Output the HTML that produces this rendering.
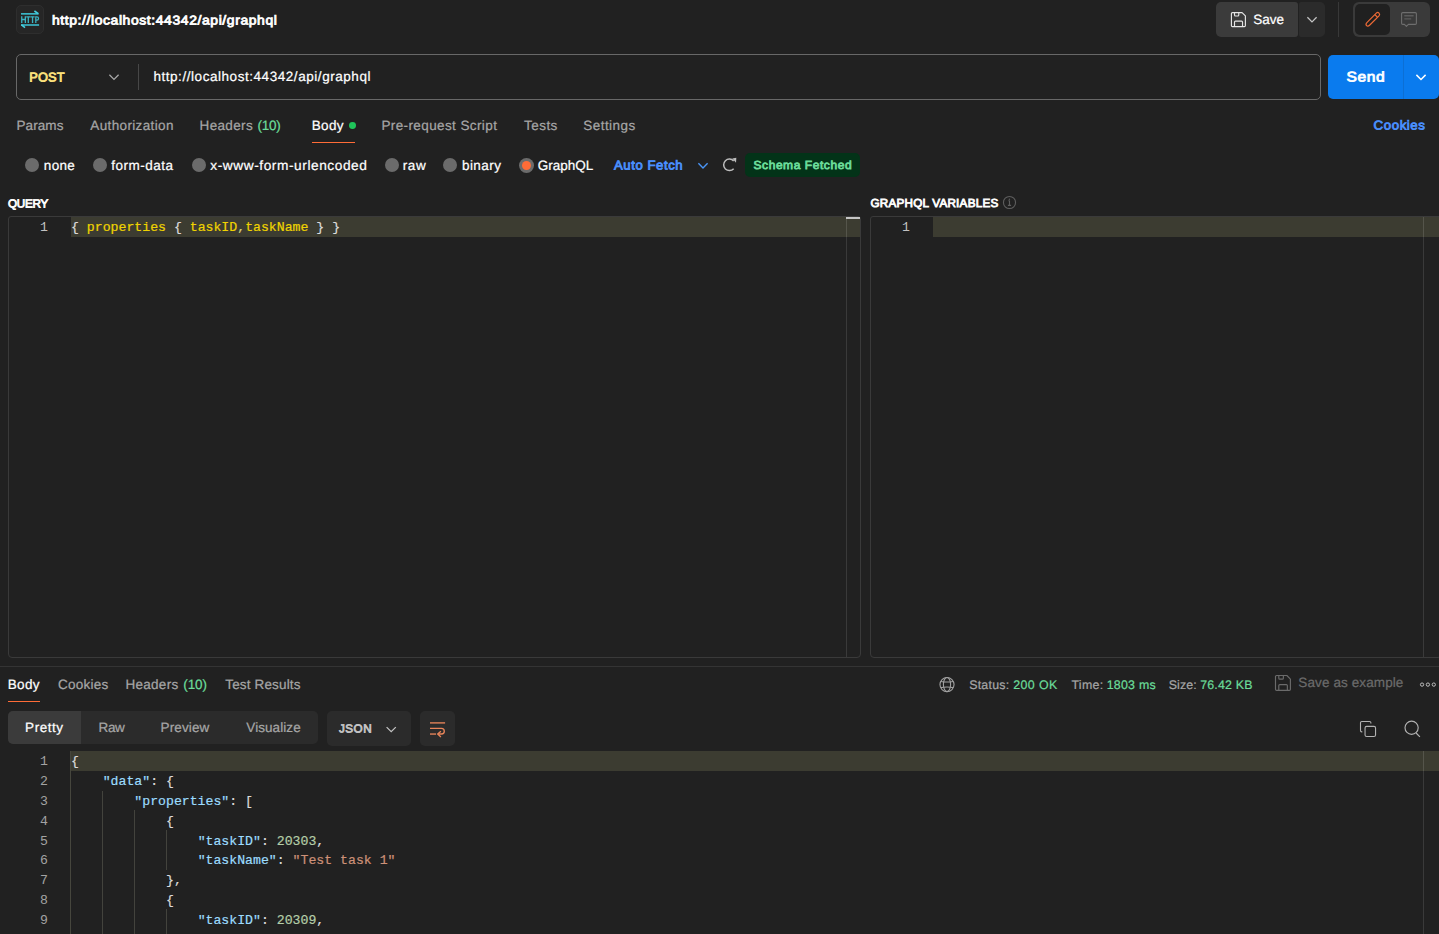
<!DOCTYPE html>
<html lang="en">
<head>
<meta charset="utf-8">
<title>Postman</title>
<style>
*{box-sizing:border-box;margin:0;padding:0}
html,body{width:1439px;height:934px;overflow:hidden;background:#212121}
body{position:relative;font-family:"Liberation Sans",sans-serif;color:#fff;-webkit-font-smoothing:antialiased}
.a{position:absolute}
.t{position:absolute;text-rendering:geometricPrecision;transform-origin:0 50%;white-space:nowrap;line-height:20px;height:20px;font-family:"Liberation Sans",sans-serif}
svg{position:absolute;overflow:visible}
.mono{font-family:"Liberation Mono",monospace;font-size:13.2px;line-height:19.8px;white-space:pre;letter-spacing:0;-webkit-text-stroke:0.2px currentColor}
.ln{position:absolute;width:40px;text-align:right;color:#a3a3a3;font-family:"Liberation Mono",monospace;font-size:13.2px;line-height:19.8px;height:19.8px}
.cl{position:absolute;left:71px;height:19.8px;color:#dcdcdc}
.k{color:#9cdcfe}.n{color:#b5cea8}.s{color:#ce9178}.y{color:#f0d400}.p{color:#dcdcdc}
.guide{position:absolute;width:1px;background:#43433d}
.radio{position:absolute;width:14px;height:14px;border-radius:50%;background:#6b6b6b}
</style>
</head>
<body>

<!-- ======================= title row ======================= -->
<div class="a" style="left:16px;top:5px;width:28px;height:29px;border-radius:5px;background:#262626;border:1px solid #2e2e2e"></div>


<div class="a" style="left:1216px;top:2px;width:82px;height:35px;border-radius:5px 3px 3px 5px;background:#3b3b3b"></div>
<div class="a" style="left:1299px;top:2px;width:26px;height:35px;border-radius:2px 5px 5px 2px;background:#2b2b2b"></div>
<div class="a" style="left:1338px;top:2px;width:1px;height:35px;background:#383838"></div>
<div class="a" style="left:1353px;top:2px;width:77px;height:35px;border-radius:6px;background:#3a3a3a"></div>
<div class="a" style="left:1355px;top:4px;width:35px;height:31px;border-radius:5px;background:#202020"></div>


<!-- ======================= url bar ======================= -->
<div class="a" style="left:16px;top:54px;width:1305px;height:46px;border-radius:5px;border:1px solid #686868"></div>
<div class="a" style="left:138px;top:64px;width:1px;height:26px;background:#474747"></div>
<div class="a" style="left:1328px;top:55px;width:111px;height:44px;border-radius:5px;background:#0a7bee"></div>
<div class="a" style="left:1403px;top:55px;width:1px;height:44px;background:#0c6fd4"></div>


<!-- ======================= request tabs ======================= -->
<div class="a" style="left:348.8px;top:122.3px;width:6.8px;height:6.8px;border-radius:50%;background:#1fc45a"></div>
<div class="a" style="left:312px;top:141.6px;width:43px;height:1.6px;background:#ff6c37"></div>

<!-- ======================= body-type radios ======================= -->
<div class="radio" style="left:25px;top:158px"></div>
<div class="radio" style="left:92.5px;top:158px"></div>
<div class="radio" style="left:191.6px;top:158px"></div>
<div class="radio" style="left:384.5px;top:158px"></div>
<div class="radio" style="left:443.3px;top:158px"></div>
<div class="radio" style="left:519px;top:157.5px;width:15px;height:15px"></div>
<div class="a" style="left:521.8px;top:160.8px;width:9.4px;height:9.4px;border-radius:50%;background:#ff6c37"></div>
<div class="a" style="left:745px;top:153px;width:115px;height:24px;border-radius:5px;background:#033318"></div>


<!-- ======================= editors ======================= -->
<div class="a" style="left:8px;top:216px;width:853px;height:442px;border:1px solid #3a3a3a;border-radius:3px 3px 4px 4px"></div>
<div class="a" style="left:71px;top:217px;width:789px;height:20px;background:#3c3c31"></div>
<div class="a" style="left:846px;top:217px;width:1px;height:440px;background:#3a3a3a"></div>
<div class="a" style="left:846px;top:217px;width:1px;height:20px;background:#55554b"></div>
<div class="a" style="left:846px;top:217px;width:14px;height:2px;background:#c4c4c4"></div>

<div class="a" style="left:870px;top:216px;width:572px;height:442px;border:1px solid #3a3a3a;border-radius:3px 3px 4px 4px"></div>
<div class="a" style="left:933px;top:217px;width:506px;height:20px;background:#3c3c31"></div>
<div class="a" style="left:1423px;top:217px;width:1px;height:440px;background:#3a3a3a"></div>
<div class="a" style="left:1423px;top:217px;width:1px;height:20px;background:#55554b"></div>

<div class="ln" style="left:8px;top:217.9px;color:#c2c2c2">1</div>
<div class="ln" style="left:870px;top:217.9px;color:#c2c2c2">1</div>
<div class="cl mono" style="top:217.9px"><span class="p">{ </span><span class="y">properties</span><span class="p"> { </span><span class="y">taskID</span><span class="p" style="color:#d8cf7a">,</span><span class="y">taskName</span><span class="p"> } }</span></div>


<!-- ======================= response header ======================= -->
<div class="a" style="left:0;top:666px;width:1439px;height:1px;background:#343434"></div>
<div class="a" style="left:8px;top:700.6px;width:32px;height:1.6px;background:#ff6c37"></div>

<div class="a" style="left:8px;top:711px;width:310px;height:33px;border-radius:5px;background:#2b2b2b"></div>
<div class="a" style="left:8px;top:711px;width:73px;height:33px;border-radius:5px 0 0 5px;background:#3b3b3b"></div>
<div class="a" style="left:327px;top:711px;width:84px;height:35px;border-radius:5px;background:#2b2b2b"></div>
<div class="a" style="left:420px;top:711px;width:35px;height:35px;border-radius:5px;background:#2b2b2b"></div>


<!-- ======================= response code ======================= -->
<div class="a" style="left:70px;top:751px;width:1369px;height:20px;background:#3c3c31"></div>
<div class="a" style="left:1423px;top:751px;width:1px;height:183px;background:#3a3a3a"></div>
<div class="a" style="left:1423px;top:751px;width:1px;height:20px;background:#55554b"></div>
<div class="guide" style="left:70px;top:751px;height:183px;background:#46463d"></div>
<div class="guide" style="left:102px;top:790.6px;height:144px"></div>
<div class="guide" style="left:134px;top:810.4px;height:124px"></div>
<div class="guide" style="left:166px;top:830.2px;height:39.6px"></div>
<div class="guide" style="left:166px;top:909.4px;height:25px"></div>
<div class="ln" style="left:8px;top:751.9px">1</div>
<div class="cl mono" style="top:751.9px"><span class="p">{</span></div>
<div class="ln" style="left:8px;top:771.9px">2</div>
<div class="cl mono" style="top:771.9px">    <span class="k">"data"</span><span class="p">: {</span></div>
<div class="ln" style="left:8px;top:791.9px">3</div>
<div class="cl mono" style="top:791.9px">        <span class="k">"properties"</span><span class="p">: [</span></div>
<div class="ln" style="left:8px;top:811.9px">4</div>
<div class="cl mono" style="top:811.9px">            <span class="p">{</span></div>
<div class="ln" style="left:8px;top:831.9px">5</div>
<div class="cl mono" style="top:831.9px">                <span class="k">"taskID"</span><span class="p">: </span><span class="n">20303</span><span class="p">,</span></div>
<div class="ln" style="left:8px;top:850.9px">6</div>
<div class="cl mono" style="top:850.9px">                <span class="k">"taskName"</span><span class="p">: </span><span class="s">"Test task 1"</span></div>
<div class="ln" style="left:8px;top:870.9px">7</div>
<div class="cl mono" style="top:870.9px">            <span class="p">},</span></div>
<div class="ln" style="left:8px;top:890.9px">8</div>
<div class="cl mono" style="top:890.9px">            <span class="p">{</span></div>
<div class="ln" style="left:8px;top:910.9px">9</div>
<div class="cl mono" style="top:910.9px">                <span class="k">"taskID"</span><span class="p">: </span><span class="n">20309</span><span class="p">,</span></div>

<svg width="1439" height="934" viewBox="0 0 1439 934" style="left:0;top:0;pointer-events:none" fill="none" stroke-linecap="butt">
<g stroke="#3ab4c4" fill="none"><path d="M21,13.85 H38.6" stroke-width="1.7"/><path d="M34.4,11.0 L38.3,13.7" stroke-width="1.6" stroke="#45cfe0"/><path d="M21.1,25.0 H39.1" stroke-width="1.7"/><path d="M21.3,24.6 L25.0,27.6" stroke-width="1.6" stroke="#45cfe0"/><path d="M21.75,16.2 V22.9 M25.35,16.2 V22.9 M21.75,19.5 H25.35" stroke-width="1.3"/><path d="M26.2,16.85 H30.4 M28.3,16.85 V22.9" stroke-width="1.3"/><path d="M30.5,16.85 H34.6 M32.55,16.85 V22.9" stroke-width="1.3"/><path d="M35.8,22.9 V16.85 H36.9 a1.65,1.65 0 0 1 0,3.3 H35.8" stroke-width="1.25"/></g>
<g transform="translate(1230.9 12.1) scale(0.9375)" fill="none" stroke="#e6e6e6" stroke-width="1.227" stroke-linejoin="round"><path d="M1.6,0.55 H11.9 L15.45,4.1 V14.4 a1.05,1.05 0 0 1 -1.05,1.05 H1.6 a1.05,1.05 0 0 1 -1.05,-1.05 V1.6 a1.05,1.05 0 0 1 1.05,-1.05 z"/><path d="M3.85,0.55 V3.2 a1,1 0 0 0 1,1 H7.4 a1,1 0 0 0 1,-1 V0.55"/><path d="M3.85,15.45 V10.6 a1,1 0 0 1 1,-1 H11.4 a1,1 0 0 1 1,1 V15.45"/></g>
<path d="M1307.4,17.3 L1312,21.9 L1316.6,17.3" stroke="#c4c4c4" stroke-width="1.25"/>
<g transform="translate(1372.7 19.4) rotate(45)" stroke="#ee6a36" stroke-width="1.15" fill="none" stroke-linejoin="round"><path d="M-1.9,-7.0 a1.9,1.9 0 0 1 3.8,0 V6.0 a1.9,2.7 0 0 1 -3.8,0 z"/><path d="M-1.9,-4.9 H1.9"/></g>
<g stroke="#6e6e6e" stroke-width="1.1" fill="none" stroke-linejoin="round"><path d="M1402.7,12.6 H1415.3 a1.1,1.1 0 0 1 1.1,1.1 V23.3 a1.1,1.1 0 0 1 -1.1,1.1 H1408.4 L1406.4,26.4 L1404.4,24.4 H1402.7 a1.1,1.1 0 0 1 -1.1,-1.1 V13.7 a1.1,1.1 0 0 1 1.1,-1.1 z"/><path d="M1404.3,15.75 H1413.6 M1404.3,18.95 H1411.2" stroke="#5c5c5c" stroke-width="1.3"/></g>
<path d="M109.4,74.8 L114,79.4 L118.6,74.8" stroke="#a8a8a8" stroke-width="1.25"/>
<path d="M1416.4,74.9 L1421,79.5 L1425.6,74.9" stroke="#ffffff" stroke-width="1.5"/>
<path d="M698.4,163.3 L703,167.9 L707.6,163.3" stroke="#4a95f5" stroke-width="1.4"/>
<path d="M733.67,168.65 A5.75,5.75 0 1 1 733.67,160.95" stroke="#bdbdbd" stroke-width="1.5"/>
<path d="M732.3,158.6 L736.3,157.8 L736.0,162.7 z" fill="#bdbdbd" stroke="none"/>
<circle cx="1009.5" cy="202.5" r="6.05" stroke="#5e5e5e" stroke-width="1.1"/>
<path d="M1009.5,200.6 V205.3 M1007.9,205.4 H1011.1 M1008.4,200.7 H1009.5" stroke="#5e5e5e" stroke-width="1.1"/><circle cx="1009.4" cy="199.2" r="0.75" fill="#5e5e5e"/>
<g stroke="#a0a0a0" stroke-width="1.1" fill="none"><circle cx="947" cy="684.55" r="7.05"/><ellipse cx="947" cy="684.55" rx="3.6" ry="7.05"/><path d="M940.7,681.5 Q947,682.6 953.3,681.5 M940.7,687.6 Q947,686.5 953.3,687.6"/></g>
<g transform="translate(1274.95 674.95) scale(1.0)" fill="none" stroke="#6b6b6b" stroke-width="1.150" stroke-linejoin="round"><path d="M1.6,0.55 H11.9 L15.45,4.1 V14.4 a1.05,1.05 0 0 1 -1.05,1.05 H1.6 a1.05,1.05 0 0 1 -1.05,-1.05 V1.6 a1.05,1.05 0 0 1 1.05,-1.05 z"/><path d="M3.85,0.55 V3.2 a1,1 0 0 0 1,1 H7.4 a1,1 0 0 0 1,-1 V0.55"/><path d="M3.85,15.45 V10.6 a1,1 0 0 1 1,-1 H11.4 a1,1 0 0 1 1,1 V15.45"/></g>
<circle cx="1422.05" cy="684.6" r="1.65" stroke="#bdbdbd" stroke-width="1.0"/>
<circle cx="1427.9" cy="684.6" r="1.65" stroke="#bdbdbd" stroke-width="1.0"/>
<circle cx="1433.8" cy="684.6" r="1.65" stroke="#bdbdbd" stroke-width="1.0"/>
<path d="M386.6,727.1 L391.2,731.7 L395.8,727.1" stroke="#c4c4c4" stroke-width="1.25"/>
<g stroke="#e9855a" stroke-width="1.35" fill="none"><path d="M430,722.9 H445.1"/><path d="M430,728.4 H441.5 a2.8,2.8 0 0 1 0,5.6 H438.2"/><path d="M440.9,731.2 L437.7,734 L440.9,736.9"/><path d="M430,734.05 H436"/></g>
<g stroke="#b2b2b2" stroke-width="1.1" fill="none"><rect x="1365.05" y="726.35" width="10.5" height="10.2" rx="1.6"/><path d="M1370.9,723.4 V722.8 a1.3,1.3 0 0 0 -1.3,-1.3 H1361.8 a1.3,1.3 0 0 0 -1.3,1.3 V730.6 a1.3,1.3 0 0 0 1.3,1.3 H1362.3"/></g>
<g stroke="#b2b2b2" stroke-width="1.15" fill="none"><circle cx="1411.6" cy="727.75" r="6.6"/><path d="M1416.1,733.0 L1419.9,736.8"/></g>
</svg>
<span class="t" id="title" style="left:51.00px;top:10.00px;font-size:12.8px;font-weight:400;color:#ffffff;letter-spacing:0.550px;transform:translate(0.93px,0.40px) rotate(0.03deg) scaleX(1.0882);-webkit-text-stroke:0.8px #ffffff;">http://localhost:44342/api/graphql</span>
<span class="t" id="save" style="left:1253.37px;top:9.90px;font-size:13.5px;font-weight:400;color:#ffffff;letter-spacing:-0.038px;-webkit-text-stroke:0.22px #ffffff;">Save</span>
<span class="t" id="post" style="left:29.00px;top:67.80px;font-size:12.8px;font-weight:400;color:#ffe47e;letter-spacing:0.167px;transform:translate(0.18px,-0.40px) rotate(0.03deg);-webkit-text-stroke:0.8px #ffe47e;">POST</span>
<span class="t" id="url" style="left:153.40px;top:66.90px;font-size:13.5px;font-weight:400;color:#ffffff;letter-spacing:0.551px;-webkit-text-stroke:0.22px #ffffff;">http://localhost:44342/api/graphql</span>
<span class="t" id="send" style="left:1346.00px;top:67.00px;font-size:14.1px;font-weight:400;color:#ffffff;letter-spacing:0.550px;transform:translate(0.43px,-0.47px) rotate(0.03deg) scaleX(1.1058);-webkit-text-stroke:0.8px #ffffff;">Send</span>
<span class="t" id="t_params" style="left:16.43px;top:115.90px;font-size:13.5px;font-weight:400;color:#a6a6a6;letter-spacing:0.100px;-webkit-text-stroke:0.22px #a6a6a6;">Params</span>
<span class="t" id="t_auth" style="left:90.28px;top:115.90px;font-size:13.5px;font-weight:400;color:#a6a6a6;letter-spacing:0.369px;-webkit-text-stroke:0.22px #a6a6a6;">Authorization</span>
<span class="t" id="t_head" style="left:199.55px;top:115.90px;font-size:13.5px;font-weight:400;color:#a6a6a6;letter-spacing:0.348px;-webkit-text-stroke:0.22px #a6a6a6;">Headers</span>
<span class="t" id="t_head10" style="left:257.47px;top:115.90px;font-size:13.5px;font-weight:400;color:#6bdd9a;letter-spacing:-0.263px;-webkit-text-stroke:0.22px #6bdd9a;">(10)</span>
<span class="t" id="t_body" style="left:311.71px;top:115.90px;font-size:13.5px;font-weight:400;color:#ffffff;letter-spacing:0.335px;-webkit-text-stroke:0.22px #ffffff;">Body</span>
<span class="t" id="t_pre" style="left:381.42px;top:115.90px;font-size:13.5px;font-weight:400;color:#a6a6a6;letter-spacing:0.393px;-webkit-text-stroke:0.22px #a6a6a6;">Pre-request Script</span>
<span class="t" id="t_tests" style="left:524.04px;top:115.90px;font-size:13.5px;font-weight:400;color:#a6a6a6;letter-spacing:0.455px;-webkit-text-stroke:0.22px #a6a6a6;">Tests</span>
<span class="t" id="t_settings" style="left:583.25px;top:115.90px;font-size:13.5px;font-weight:400;color:#a6a6a6;letter-spacing:0.460px;-webkit-text-stroke:0.22px #a6a6a6;">Settings</span>
<span class="t" id="t_cookies" style="left:1373.00px;top:115.00px;font-size:12.8px;font-weight:400;color:#4a90ff;letter-spacing:0.550px;transform:translate(0.58px,0.43px) rotate(0.03deg) scaleX(1.0370);-webkit-text-stroke:0.8px #4a90ff;">Cookies</span>
<span class="t" id="r_none" style="left:43.83px;top:155.90px;font-size:13.5px;font-weight:400;color:#ffffff;letter-spacing:0.326px;-webkit-text-stroke:0.22px #ffffff;">none</span>
<span class="t" id="r_form" style="left:111.20px;top:155.90px;font-size:13.5px;font-weight:400;color:#ffffff;letter-spacing:0.519px;-webkit-text-stroke:0.22px #ffffff;">form-data</span>
<span class="t" id="r_xwww" style="left:210.00px;top:155.90px;font-size:13.5px;font-weight:400;color:#ffffff;letter-spacing:0.550px;transform:translate(0.31px,0.00px) scaleX(1.0150);-webkit-text-stroke:0.22px #ffffff;">x-www-form-urlencoded</span>
<span class="t" id="r_raw" style="left:402.71px;top:155.90px;font-size:13.5px;font-weight:400;color:#ffffff;letter-spacing:0.635px;-webkit-text-stroke:0.22px #ffffff;">raw</span>
<span class="t" id="r_bin" style="left:461.90px;top:155.90px;font-size:13.5px;font-weight:400;color:#ffffff;letter-spacing:0.481px;-webkit-text-stroke:0.22px #ffffff;">binary</span>
<span class="t" id="r_gql" style="left:537.73px;top:155.90px;font-size:13.5px;font-weight:400;color:#ffffff;letter-spacing:-0.004px;-webkit-text-stroke:0.22px #ffffff;">GraphQL</span>
<span class="t" id="autofetch" style="left:614.00px;top:155.00px;font-size:12.8px;font-weight:400;color:#4a90ff;letter-spacing:0.550px;transform:translate(0.03px,0.39px) rotate(0.03deg) scaleX(1.0264);-webkit-text-stroke:0.8px #4a90ff;">Auto Fetch</span>
<span class="t" id="schema" style="left:753.00px;top:155.80px;font-size:11.7px;font-weight:400;color:#6bdd9a;letter-spacing:0.550px;transform:translate(0.52px,0.00px) scaleX(1.0265);-webkit-text-stroke:0.8px #6bdd9a;">Schema Fetched</span>
<span class="t" id="l_query" style="left:8.00px;top:193.90px;font-size:11.7px;font-weight:400;color:#ffffff;letter-spacing:-0.251px;transform:translate(0.00px,0.40px) rotate(0.03deg);-webkit-text-stroke:0.8px #ffffff;">QUERY</span>
<span class="t" id="l_vars" style="left:870.45px;top:193.90px;font-size:11.7px;font-weight:400;color:#ffffff;letter-spacing:0.232px;-webkit-text-stroke:0.8px #ffffff;">GRAPHQL VARIABLES</span>
<span class="t" id="s_body" style="left:7.68px;top:674.90px;font-size:13.5px;font-weight:400;color:#ffffff;letter-spacing:0.389px;-webkit-text-stroke:0.22px #ffffff;">Body</span>
<span class="t" id="s_cookies" style="left:57.91px;top:674.90px;font-size:13.5px;font-weight:400;color:#a6a6a6;letter-spacing:0.259px;-webkit-text-stroke:0.22px #a6a6a6;">Cookies</span>
<span class="t" id="s_head" style="left:125.43px;top:674.90px;font-size:13.5px;font-weight:400;color:#a6a6a6;letter-spacing:0.291px;-webkit-text-stroke:0.22px #a6a6a6;">Headers</span>
<span class="t" id="s_head10" style="left:183.23px;top:674.90px;font-size:13.5px;font-weight:400;color:#6bdd9a;letter-spacing:-0.068px;-webkit-text-stroke:0.22px #6bdd9a;">(10)</span>
<span class="t" id="s_test" style="left:225.34px;top:674.90px;font-size:13.5px;font-weight:400;color:#a6a6a6;letter-spacing:0.142px;-webkit-text-stroke:0.22px #a6a6a6;">Test Results</span>
<span class="t" id="st_status" style="left:969.14px;top:675.00px;font-size:12.4px;font-weight:400;color:#a6a6a6;letter-spacing:0.241px;-webkit-text-stroke:0.22px #a6a6a6;">Status:</span>
<span class="t" id="st_200" style="left:1013.28px;top:675.00px;font-size:12.4px;font-weight:400;color:#6bdd9a;letter-spacing:0.411px;-webkit-text-stroke:0.22px #6bdd9a;">200 OK</span>
<span class="t" id="st_time" style="left:1071.47px;top:675.00px;font-size:12.4px;font-weight:400;color:#a6a6a6;letter-spacing:0.290px;-webkit-text-stroke:0.22px #a6a6a6;">Time:</span>
<span class="t" id="st_ms" style="left:1106.63px;top:675.00px;font-size:12.4px;font-weight:400;color:#6bdd9a;letter-spacing:0.253px;-webkit-text-stroke:0.22px #6bdd9a;">1803 ms</span>
<span class="t" id="st_size" style="left:1168.76px;top:675.00px;font-size:12.4px;font-weight:400;color:#a6a6a6;letter-spacing:0.091px;-webkit-text-stroke:0.22px #a6a6a6;">Size:</span>
<span class="t" id="st_kb" style="left:1200.16px;top:675.00px;font-size:12.4px;font-weight:400;color:#6bdd9a;letter-spacing:0.195px;-webkit-text-stroke:0.22px #6bdd9a;">76.42 KB</span>
<span class="t" id="saveex" style="left:1298.35px;top:672.90px;font-size:13.5px;font-weight:400;color:#6b6b6b;letter-spacing:0.105px;-webkit-text-stroke:0.22px #6b6b6b;">Save as example</span>
<span class="t" id="v_pretty" style="left:25.11px;top:717.90px;font-size:13.5px;font-weight:400;color:#ffffff;letter-spacing:0.543px;-webkit-text-stroke:0.22px #ffffff;">Pretty</span>
<span class="t" id="v_raw" style="left:98.56px;top:717.90px;font-size:13.5px;font-weight:400;color:#a6a6a6;letter-spacing:-0.405px;-webkit-text-stroke:0.22px #a6a6a6;">Raw</span>
<span class="t" id="v_preview" style="left:160.53px;top:717.90px;font-size:13.5px;font-weight:400;color:#a6a6a6;letter-spacing:0.137px;-webkit-text-stroke:0.22px #a6a6a6;">Preview</span>
<span class="t" id="v_vis" style="left:246.33px;top:717.90px;font-size:13.5px;font-weight:400;color:#a6a6a6;letter-spacing:0.067px;-webkit-text-stroke:0.22px #a6a6a6;">Visualize</span>
<span class="t" id="v_json" style="left:338.00px;top:718.90px;font-size:11.7px;font-weight:400;color:#c4c4c4;letter-spacing:0.478px;transform:translate(0.98px,0.42px) rotate(0.03deg);-webkit-text-stroke:0.8px #c4c4c4;">JSON</span>
</body>
</html>
